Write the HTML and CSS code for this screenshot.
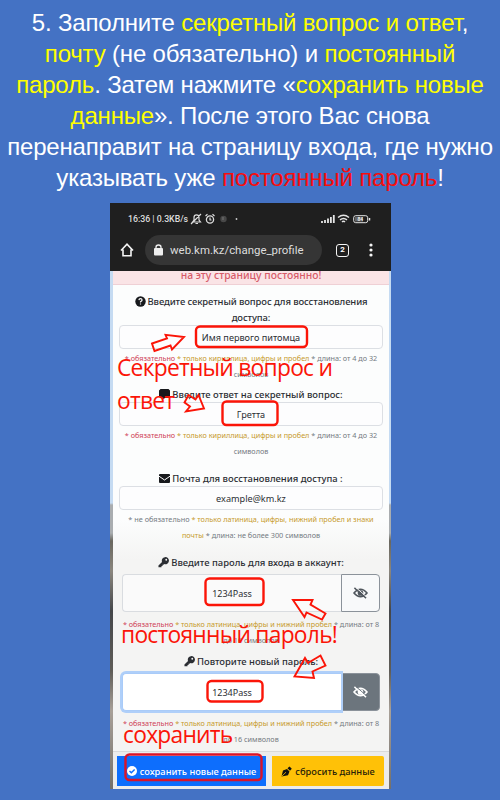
FILE: index.html
```html
<!DOCTYPE html>
<html lang="ru">
<head>
<meta charset="utf-8">
<title>Смена профиля</title>
<link rel="stylesheet" href="styles.css">
</head>
<body>
<svg class="defs" width="0" height="0">
  <symbol id="eye" viewBox="0 0 16 12"><path d="M1 6Q8-2 15 6Q8 14 1 6Z" fill="none" stroke="currentColor" stroke-width="1.600"/><circle cx="8" cy="6" r="3" fill="currentColor"/><path d="M1.500.5 14 11.500" stroke="currentColor" stroke-width="1.600"/><path d="M3 0 15.500 11" stroke="var(--gap)" stroke-width="1"/></symbol>
  <symbol id="key" viewBox="0 0 12 12"><path d="M.5 9.300 4.400 5.400A3.900 3.900 0 1 1 6.800 7.700L6 8.500H5V9.700H3.800V11.300H.5Z" fill="currentColor"/><circle cx="9" cy="3" r="1" fill="var(--gap)"/></symbol>
</svg>
<main class="slide">
  <h1 class="headline">
    <span>5. Заполните <em>секретный вопрос и ответ</em>,</span>
    <span><em>почту</em> (не обязательно) и <em>постоянный</em></span>
    <span><em>пароль</em>. Затем нажмите «<em>сохранить новые</em></span>
    <span><em>данные</em>». После этого Вас снова</span>
    <span>перенаправит на страницу входа, где нужно</span>
    <span>указывать уже <b>постоянный пароль</b>!</span>
  </h1>
  <section class="phone">
    <div class="status">
      <span class="clock">16:36 | 0.3KB/s</span>
      <svg class="st-icons" width="50" height="12" viewBox="0 0 50 12" fill="none" stroke="#ddd"><path d="M2.500 9 4 7V4.500Q4 1.800 6.500 1.800T9 4.500V7L10.500 9ZM1 11 11 1M5.500 10.500H8" stroke-width="1.200"/><circle cx="20" cy="6.500" r="3.600" stroke-width="1.300"/><path d="M15.500 3 17.500 1.200M24.500 3 22.500 1.200M20 4.500V7H21.500" stroke-width="1.200"/><circle cx="33.500" cy="6" r="3.200" fill="#484848" stroke="none"/><path d="M33 4V7" stroke="#777"/><circle cx="46.500" cy="6" r=".9" fill="#ccc" stroke="none"/></svg>
      <svg class="st-right" width="50" height="12" viewBox="0 0 50 12" fill="none" stroke="#e5e5e5"><path d="M1 10V8M4 10V7M7 10V5.500M9.900 10V4M12.800 10V2" stroke-width="1.800"/><path d="M17 4.500Q22.500 0 28 4.500M19 6.800Q22.500 4 26 6.800M21 8.900Q22.500 7.500 24 8.900" stroke-width="1.500"/><rect x="32.700" y="2.700" width="14" height="7" rx="2"/><rect x="34" y="4" width="8" height="4.500" fill="#666" stroke="none"/><path d="M48.500 5V7.500" stroke-width="1.500"/><text x="36.500" y="8.300" class="batt">84</text></svg>
    </div>
    <div class="browser">
      <svg class="home" width="14" height="14" viewBox="0 0 14 14" fill="none" stroke="#f5f5f5" stroke-width="1.600"><path d="M1 7.500 7 1.200 13 7.500M3 6.500V12.700H11V6.500"/></svg>
      <div class="url"><svg width="9" height="12" viewBox="0 0 9 12"><rect y="4" width="9" height="7.500" rx="1" fill="#eee"/><path d="M2 5V3.200Q2 1 4.500 1T7 3.200V5" fill="none" stroke="#eee" stroke-width="1.300"/></svg><span>web.km.kz/change_profile</span></div>
      <div class="tabs">2</div>
      <svg class="dots" width="4" height="14" viewBox="0 0 4 14" fill="#f5f5f5"><circle cx="2" cy="2" r="1.600"/><circle cx="2" cy="7" r="1.600"/><circle cx="2" cy="12" r="1.600"/></svg>
    </div>
    <div class="page">
      <div class="alert"><span>на эту страницу постоянно!</span></div>
      <form class="card">
        <div class="group g1">
          <label><svg width="11" height="11" viewBox="0 0 11 11"><circle cx="5.500" cy="5.500" r="5.200" fill="#17191c"/><path d="M3.900 4.100Q4 2.700 5.500 2.700T7.100 4Q7.100 4.800 5.500 5.800V6.500M5.500 7.400V8.600" fill="none" stroke="#fff" stroke-width="1.200"/></svg>Введите секретный вопрос для восстановления</label>
          <label>доступа:</label>
          <div class="input">Имя первого питомца</div>
          <p class="hint"><i>* обязательно</i> <u>* только кириллица, цифры и пробел</u> * длина: от 4 до 32</p>
          <p class="hint">символов</p>
        </div>
        <div class="group g2">
          <label><svg width="11" height="11" viewBox="0 0 11 11"><path d="M1.500 0H9.500L11 1.500V7.500L9.500 9H6L3 11V9H1.500L0 7.500V1.500Z" fill="#17191c"/></svg>Введите ответ на секретный вопрос:</label>
          <div class="input">Гретта</div>
          <p class="hint"><i>* обязательно</i> <u>* только кириллица, цифры и пробел</u> * длина: от 4 до 32</p>
          <p class="hint">символов</p>
        </div>
        <div class="group g3">
          <label><svg width="11" height="9" viewBox="0 0 11 9"><rect width="11" height="9" rx="1" fill="#17191c"/><path d="M0 2.200 5.500 6 11 2.200" fill="none" stroke="#fff"/></svg>Почта для восстановления доступа :</label>
          <div class="input">example@km.kz</div>
          <p class="hint mail"><s>* не обязательно</s> <u>* только латиница, цифры, нижний пробел и знаки</u></p>
          <p class="hint mail"><u>почты</u> * длина: не более 300 символов</p>
        </div>
        <div class="group g4">
          <label><svg class="key" width="11" height="11"><use href="#key"/></svg>Введите пароль для входа в аккаунт:</label>
          <div class="pass"><div class="field">1234Pass</div><div class="toggle"><svg width="15" height="12"><use href="#eye"/></svg></div></div>
          <p class="hint"><i>* обязательно</i> <u>* только латиница, цифры и нижний пробел</u> * длина: от 8</p>
          <p class="hint">до 16 символов</p>
        </div>
        <div class="group g5">
          <label><svg class="key" width="11" height="11"><use href="#key"/></svg>Повторите новый пароль:</label>
          <div class="pass focus"><div class="field">1234Pass</div><div class="toggle"><svg width="15" height="12"><use href="#eye"/></svg></div></div>
          <p class="hint"><i>* обязательно</i> <u>* только латиница, цифры и нижний пробел</u> * длина: от 8</p>
          <p class="hint">до 16 символов</p>
        </div>
      </form>
      <div class="actions">
        <div class="btn save"><svg width="10" height="10" viewBox="0 0 10 10"><circle cx="5" cy="5" r="5" fill="#fff"/><path d="M2.500 5 4.300 6.800 7.600 3.400" fill="none" stroke="#0d6efd" stroke-width="1.400"/></svg><span>сохранить новые данные</span></div>
        <div class="btn reset"><svg width="11" height="11" viewBox="0 0 11 11"><path d="M.5 10.500 2 4.500 6 3 8.500 5.500 7 9.300ZM6.500 2.300 8.500.4 10.800 2.700 9 4.800Z" fill="#111"/><path d="M.8 10.200 5 6.200" stroke="#ffc107" stroke-width=".8"/></svg><span>сбросить данные</span></div>
      </div>
    </div>
  </section>
  <div class="note n1">Секретный вопрос и</div>
  <div class="note n2">ответ</div>
  <div class="note n3">постоянный пароль!</div>
  <div class="note n4">сохранить</div>
  <svg class="marks" width="500" height="800" viewBox="0 0 500 800" fill="none" stroke="#fb1508" stroke-width="2.400">
    <rect x="196" y="326.500" width="111" height="20.500" rx="4"/>
    <rect x="222.500" y="401.500" width="55" height="23.500" rx="4"/>
    <rect x="205.500" y="578.500" width="58" height="26.500" rx="4"/>
    <rect x="207.500" y="681" width="55" height="20.500" rx="4"/>
    <rect x="125.500" y="754.500" width="136" height="25.500" rx="4" stroke="#dc1428"/>
    <g stroke-width="1.900"><path d="M152 343.500 167 338.500 165.500 334.800 184 337 172 349.500 170.500 345.500 154.500 351Z"/>
    <path d="M188.500 395 195.500 399.500 198.500 395 204 408.500 186 411.500 190 406.500 184.500 402.500Z"/>
    <path d="M293 600 312.500 600 310.500 604.500 325.500 613.500 322 619.500 306.500 612.500 304.500 617Z"/>
    <path d="M294.500 676.500 305 658 308 663 320.500 655.500 325.500 665.500 312.500 671.500 314 678Z"/></g>
  </svg>
</main>
</body>
</html>
```
FILE: styles.css
```css
* { box-sizing: border-box; }
body { margin: 0; background: #4472c4; }
.defs { position: absolute; }
.slide { position: relative; width: 500px; height: 800px; overflow: hidden; font-family: "Noto Sans", sans-serif; display: flex; flex-direction: column; }
.headline { margin: 0; padding-top: 7px; height: 203px; font: 400 24px/31.1px "Liberation Sans", sans-serif; color: #fff; text-align: center; white-space: nowrap; letter-spacing: -0.18px; }
.headline span { display: block; }
.headline em { font-style: normal; color: #ff0; }
.headline b { font-weight: 400; color: #f80d0d; }
.phone { width: 281px; height: 586px; margin-left: 110px; background: #1f1f1f; display: flex; flex-direction: column; }
.status { height: 32px; display: flex; align-items: center; padding: 0 20px 0 18px; font: 500 8.75px Roboto, sans-serif; color: #ddd; white-space: nowrap; }
.st-icons { margin-left: 2px; }
.st-right { margin-left: auto; }
.batt { font: bold 5px Roboto, sans-serif; fill: #eee; stroke: none; }
.browser { height: 36px; padding: 0 18px 6px 10px; display: flex; align-items: center; }
.home { margin-right: 11px; }
.url { width: 177px; height: 30px; border-radius: 15px; background: #353535; color: #ddd; font: 400 11.45px Roboto, sans-serif; display: flex; align-items: center; gap: 7px; padding-left: 9px; margin-right: 14px; white-space: nowrap; }
.tabs { width: 13px; height: 13px; border: 1.5px solid #f5f5f5; border-radius: 3px; font: bold 8px/10px Roboto, sans-serif; color: #fff; text-align: center; }
.dots { margin-left: auto; }
.page { flex: 1; min-height: 0; display: flex; flex-direction: column; padding: 0 2px 0 3px; background: linear-gradient(#c5dbf2 0 232px, #a9adb0 234px 262px, #69675f 270px, #8a867e 300px, #45474a 340px, #5f5d58 400px, #a8a098 440px, #74706a 100%); }
.alert { height: 14px; background: #fae4e6; border-bottom: 1px solid #efd0d5; color: #d75b69; font-size: 10.4px; font-weight: 500; line-height: 8px; text-align: center; white-space: nowrap; overflow: hidden; }
.card { height: 466px; background: linear-gradient(#fcfdfd 0 235px, #f4f4f3 275px); padding: 8px 3px 0; overflow: hidden; color: #2b2e33; --gap: #f6f6f6; }
.group { display: flex; flex-direction: column; white-space: nowrap; text-align: center; }
.g1 { height: 93px; } .g2 { height: 84px; } .g3 { height: 84px; } .g4 { height: 99px; }
.g1 label { letter-spacing: -0.1px; }
label { display: flex; align-items: center; justify-content: center; gap: 2px; height: 16px; font-size: 9.45px; font-weight: 500; }
.input { height: 24px; margin: 0 3px; border: 1px solid #dcdfe4; border-radius: 4px; background: #fdfdfe; font-size: 9.15px; line-height: 23px; }
.hint { margin: 0; height: 16px; font-size: 7.26px; line-height: 18px; color: #747a82; }
.mail { font-size: 7.3px; }
.hint i { font-style: normal; color: #cf4257; }
.hint u { text-decoration: none; color: #c79a2c; }
.hint s { text-decoration: none; }
.pass { display: flex; height: 38px; margin: 4px 6px 3px; font-size: 9px; }
.field { flex: 1; line-height: 38px; background: #fafafa; border: 1px solid #d9dce0; border-right: 0; border-radius: 4px 0 0 4px; }
.toggle { width: 39px; border: 1px solid #8b929a; border-radius: 0 4px 4px 0; display: flex; align-items: center; justify-content: center; color: #50565d; background: #f8f9fa; }
.focus .field { background: #fff; border-color: #a9cbf8; box-shadow: 0 0 0 2px #afcff9; z-index: 1; }
.focus .toggle { background: #6c757d; color: #fff; --gap: #6c757d; }
.actions { flex: 1; background: #ececec; border-top: 1px solid #d9d9d9; padding: 4px 4px 0; display: flex; gap: 6px; font-size: 9.3px; font-weight: 500; }
.btn { height: 30px; display: flex; align-items: center; justify-content: center; gap: 3px; white-space: nowrap; }
.save { width: 149px; background: #0d6efd; color: #fff; }
.reset { width: 112px; background: #ffc107; color: #292107; border-radius: 0 2px 2px 0; }
.note { position: absolute; z-index: 2; white-space: nowrap; color: #fb1508; font: 400 22.8px/30px "Open Sans", sans-serif; letter-spacing: -0.75px; }
.n1 { left: 117px; top: 353px; }
.n2 { left: 117px; top: 386px; }
.n3 { left: 121px; top: 620px; }
.n4 { left: 123px; top: 720px; }
.marks { position: absolute; z-index: 2; left: 0; top: 0; }
```
